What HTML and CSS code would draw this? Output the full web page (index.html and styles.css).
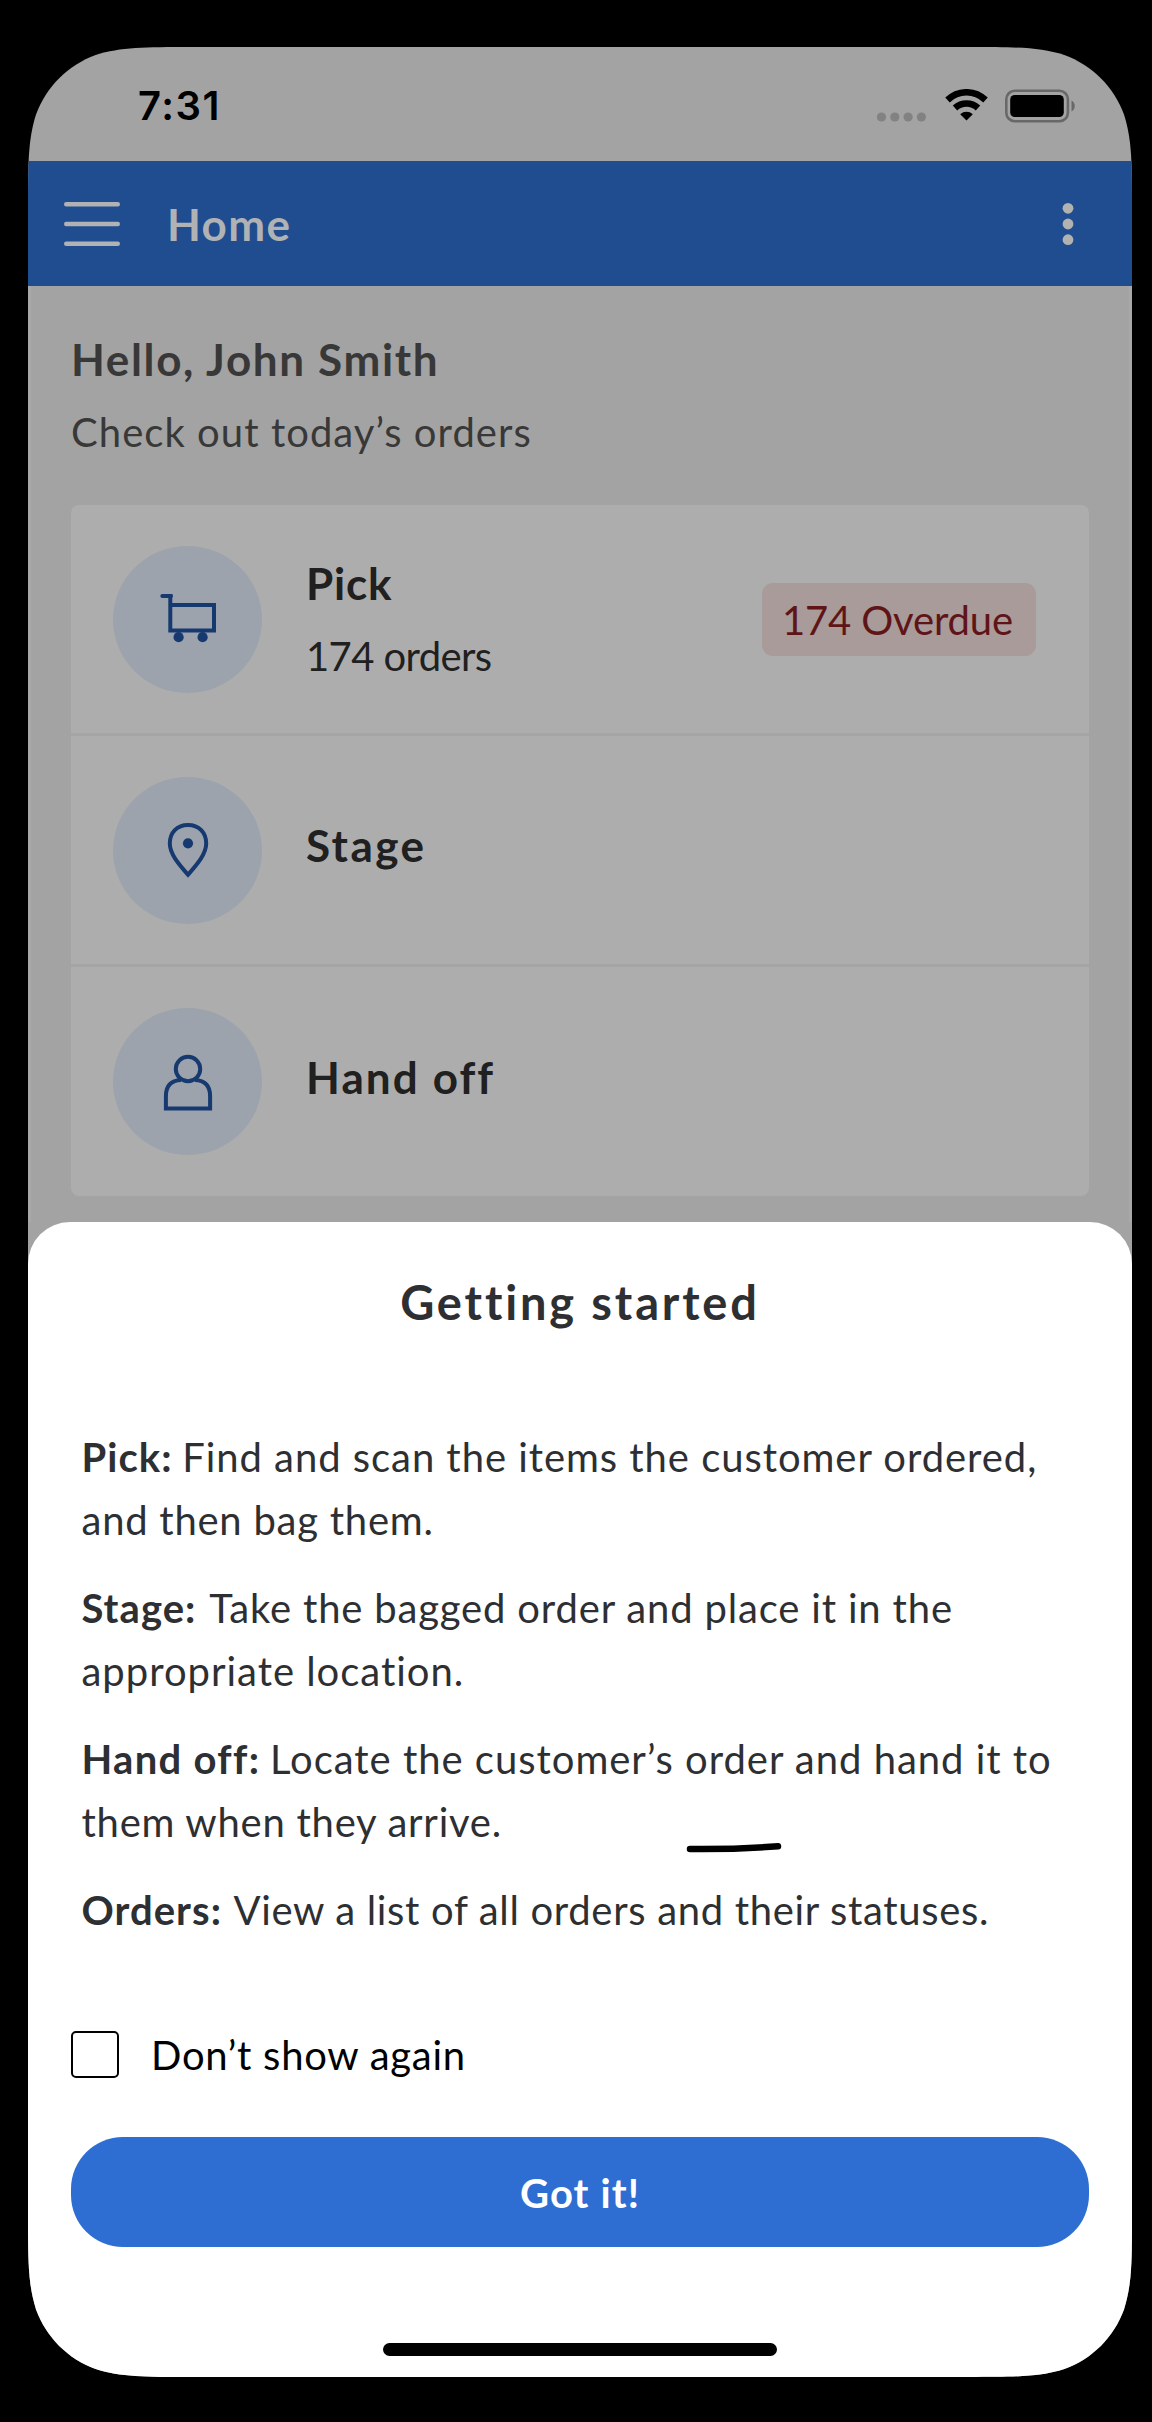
FILE: index.html
```html
<!DOCTYPE html>
<html lang="en">
<head>
<meta charset="utf-8">
<title>Home</title>
<link rel="stylesheet" href="styles.css">
</head>
<body>
<main class="phone">
  <header class="status">
    <span class="time">7:31</span>
    <div class="indicators">
      <svg class="signal" width="49" height="10" viewBox="0 0 49 10"><circle cx="4.5" cy="5" r="4.6"/><circle cx="17.8" cy="5" r="4.6"/><circle cx="31.1" cy="5" r="4.6"/><circle cx="44.4" cy="5" r="4.6"/></svg>
      <svg class="wifi" width="43" height="32" viewBox="0 0 43 32"><path class="arc" d="M2.5 11C13.5 .7 29.5 .7 40.5 11M10 19C16.5 13 26.5 13 33 19"/><path d="M15.2 25.2c3.6-3.3 9-3.3 12.6 0L21.5 31.4z"/></svg>
      <svg class="battery" width="71" height="34" viewBox="0 0 71 34"><rect class="shell" x="1.3" y="1.8" width="61.6" height="30.4" rx="8.5"/><rect x="5.2" y="6" width="53.6" height="22" rx="4.5"/><path class="nub" d="M66.5 11.5c4.3 1.7 4.3 9.3 0 11z"/></svg>
    </div>
  </header>

  <nav class="appbar">
    <svg class="menu" width="56" height="44" viewBox="0 0 56 44"><path d="M2.2 2.3H53.8M2.2 22H53.8M2.2 41.7H53.8"/></svg>
    <h1 class="page-title">Home</h1>
    <svg class="more" width="12" height="44" viewBox="0 0 12 44"><circle cx="6" cy="6.3" r="5.4"/><circle cx="6" cy="22" r="5.4"/><circle cx="6" cy="37.7" r="5.4"/></svg>
  </nav>

  <section class="home">
    <h2 class="hello">Hello, John Smith</h2>
    <p class="sub">Check out today’s orders</p>
    <ul class="tasks">
      <li class="task">
        <span class="disc"><svg width="60" height="60" viewBox="0 0 60 60"><path class="line round" d="M4.300 7H13"/><path class="line" d="M12.300 5V41.500H56V16H12.300"/><circle cx="20.600" cy="48.200" r="5.100"/><circle cx="44.600" cy="48.200" r="5.100"/></svg></span>
        <div class="label"><h3 class="name pick">Pick</h3><p class="count">174 orders</p></div>
        <span class="overdue">174 Overdue</span>
      </li>
      <li class="task">
        <span class="disc"><svg width="60" height="60" viewBox="0 0 60 60"><path class="line" d="M30 54.700C22 45.500 11.800 34.500 11.800 23.500C11.800 12.500 19 5 30 5S48.200 12.500 48.200 23.500C48.200 34.500 38 45.500 30 54.700Z"/><circle cx="30" cy="23.300" r="5.100"/></svg></span>
        <div class="label single"><h3 class="name stage">Stage</h3></div>
      </li>
      <li class="task">
        <span class="disc"><svg width="60" height="60" viewBox="0 0 60 60"><circle class="line" cx="30" cy="17" r="12.200"/><path class="line" d="M23 28C12.500 28.500 7.900 34 7.900 44V56.600H52.100V44C52.100 34 47.500 28.500 37 28"/></svg></span>
        <div class="label single"><h3 class="name handoff">Hand off</h3></div>
      </li>
    </ul>
  </section>

  <section class="sheet">
    <h2 class="sheet-title">Getting started</h2>
    <div class="steps">
      <p class="p-pick"><b>Pick:</b> Find and scan the items the customer ordered,<br><span class="tight">and then bag them.</span></p>
      <p class="p-stage"><b>Stage:</b> Take the bagged order and place it in the<br><span class="wide">appropriate location.</span></p>
      <p class="p-hand"><b>Hand off:</b> Locate the customer’s order and hand it to<br><span class="tight">them when they arrive.</span></p>
      <p class="p-orders"><b>Orders:</b> View a list of all orders and their statuses.</p>
      <svg class="mark" width="100" height="12" viewBox="0 0 100 12"><path d="M4 8Q50 8.500 92 5.200"/></svg>
    </div>
    <label class="again"><span class="box"></span>Don’t show again</label>
    <button class="got" type="button">Got it!</button>
    <div class="home-bar"></div>
  </section>
</main>
</body>
</html>
```
FILE: styles.css
```css
* { box-sizing: border-box; margin: 0; padding: 0; }
body { background: #000; padding: 47px 20px 45px 28px; font-family: Lato, sans-serif; }
svg { display: block; }
h1, h2, h3 { font-size: 44px; line-height: 60px; font-weight: 700; }
p { font-size: 40px; line-height: 60px; }

.phone {
  width: 1104px;
  height: 2330px;
  background: #a3a3a3;
  clip-path: path("M163.500 0H940.500C987.500 0 1011 0 1036.400 8C1064.100 18.100 1085.900 39.900 1096 67.600C1104 93 1104 116.500 1104 163.500V2166.500C1104 2213.500 1104 2237 1096 2262.400C1085.900 2290.100 1064.100 2311.900 1036.400 2322C1011 2330 987.500 2330 940.500 2330H163.500C116.500 2330 93 2330 67.600 2322C39.900 2311.900 18.100 2290.100 8 2262.400C0 2237 0 2213.500 0 2166.500V163.500C0 116.500 0 93 8 67.600C18.100 39.900 39.900 18.100 67.600 8C93 0 116.500 0 163.500 0Z");
}

.status { height: 114px; display: flex; justify-content: space-between; padding: 35px 56px 0 110px; }
.time { font: 600 40px/48px Inter, sans-serif; letter-spacing: 1.500px; }
.indicators { display: flex; align-items: flex-start; padding-top: 6.500px; }
.signal { fill: #828282; margin: 23px 19px 0 0; }
.wifi { margin-right: 17px; }
.arc { fill: none; stroke: #000; stroke-width: 6.600; }
.shell { fill: none; stroke: #686868; stroke-width: 2.600; }
.nub { fill: #686868; }

.appbar { height: 125px; background: #1f4d90; display: flex; align-items: center; padding: 0 58px 0 36px; }
.menu { stroke: #b0b2b4; stroke-width: 4.400; stroke-linecap: round; }
.page-title { flex: 1; color: #b0b2b4; margin-left: 47px; letter-spacing: 1.400px; }
.more { fill: #b2b2b0; }

.home { padding: 43px 43px 26px; box-shadow: inset 3px 0 #a8a8a8, inset -3px 0 #a8a8a8; }
.hello { color: #383838; letter-spacing: 1.640px; margin-bottom: 13px; }
.sub { color: #383838; letter-spacing: 1.050px; }
.tasks { list-style: none; margin-top: 43px; background: #adadad; border-radius: 8px; }
.task { height: 231px; display: flex; align-items: center; padding: 0 53px 0 42px; }
.task:last-child { height: 229px; }
.task:not(:last-child) { border-bottom: 3px solid #a5a5a5; }
.disc { width: 149px; height: 147px; border-radius: 50%; background: #9ca3ac; display: flex; align-items: center; justify-content: center; }
.disc svg { fill: #163a70; }
.disc svg .line { fill: none; stroke: #163a70; stroke-width: 4; }
.disc svg .round { stroke-linecap: round; }
.label { flex: 1; margin-left: 44px; color: #202020; }
.single { padding-bottom: 10px; }
.name { letter-spacing: .800px; }
.pick { margin-bottom: 13px; }
.stage { letter-spacing: 2.450px; }
.handoff { letter-spacing: 2.100px; }
.count { letter-spacing: -.600px; }
.overdue { width: 274px; height: 73px; border-radius: 11px; background: #a89b9a; color: #5f1517; font-size: 40px; line-height: 75px; letter-spacing: -.150px; padding-left: 20px; }

.sheet { background: #fff; border-radius: 42px 42px 0 0; height: 1155px; padding: 50px 43px 0; display: flex; flex-direction: column; }
.sheet-title { font-size: 47px; letter-spacing: 2.850px; color: #2e2f32; text-align: center; }
.steps { position: relative; margin-top: 94px; padding-left: 10.500px; color: #2e2f32; display: flex; flex-direction: column; gap: 25px; white-space: nowrap; }
.steps p { line-height: 63px; }
.steps b { letter-spacing: 1.050px; }
.steps .p-pick { letter-spacing: .950px; }
.p-pick b { margin-right: -1.500px; }
.steps .p-stage { letter-spacing: .830px; }
.p-stage b { margin-right: 3px; }
.steps .p-hand { letter-spacing: .980px; }
.steps .p-hand b { letter-spacing: 1.300px; margin-right: -1.500px; }
.steps .p-orders { letter-spacing: .670px; }
.p-orders b { margin-right: 2px; }
.tight { letter-spacing: .750px; }
.wide { letter-spacing: .980px; }
.mark { position: absolute; left: 615px; top: 415px; fill: none; stroke: #000; stroke-width: 6.500; stroke-linecap: round; }
.again { margin-top: 82.500px; display: flex; align-items: center; font-size: 40px; line-height: 60px; letter-spacing: .740px; color: #000; }
.box { width: 48px; height: 47px; border: 2.500px solid #000; border-radius: 5px; margin-right: 32px; }
.got { margin-top: 52.500px; flex: none; height: 110px; border: 0; border-radius: 52px; background: #2e6ed2; color: #fff; font: 700 40px/60px Lato, sans-serif; letter-spacing: 1.100px; padding-top: 1px; }
.home-bar { width: 394px; height: 13px; border-radius: 7px; background: #000; margin: 96px auto 0; }
```
